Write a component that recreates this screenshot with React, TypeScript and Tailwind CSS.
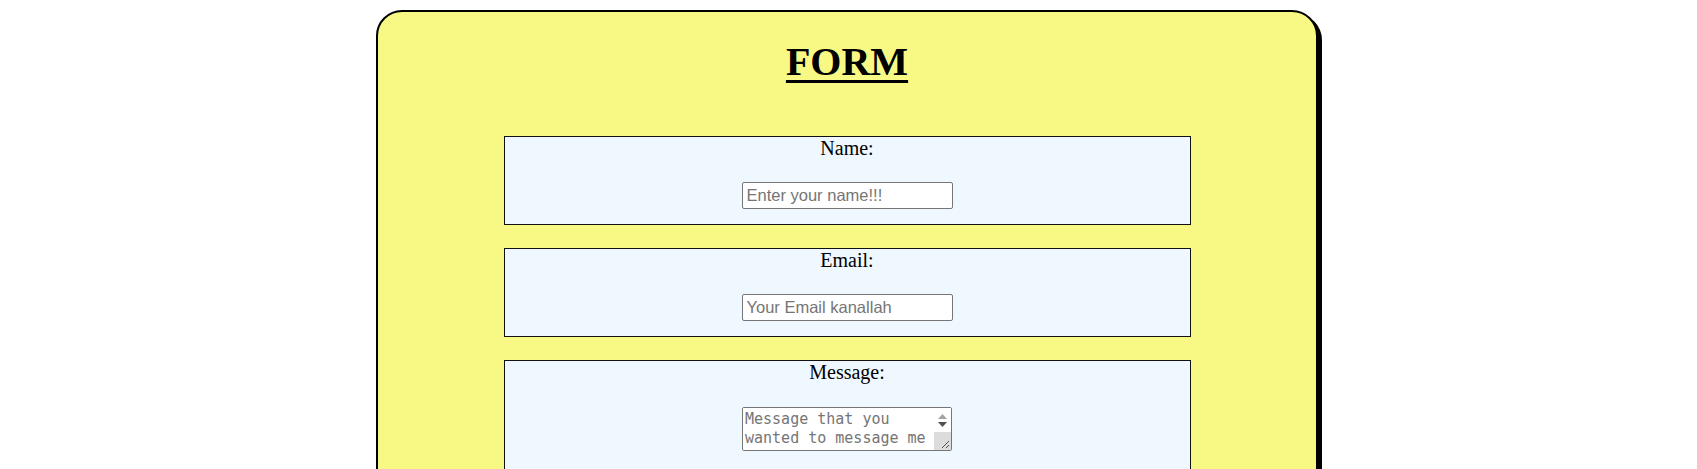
import type { ReactNode } from "react";

const serif = { fontFamily: '"Liberation Serif", "Times New Roman", serif' };
const sans = { fontFamily: '"Liberation Sans", Arial, sans-serif' };

function Field({ label, children, last }: { label: string; children: ReactNode; last?: boolean }) {
  return (
    <div
      className={
        "flex w-[687px] flex-col items-center border border-[#111] bg-[#f0f8ff] " + (last ? "pb-[40px]" : "pb-[15px]")
      }
    >
      <label className="text-[20px] leading-[22px] text-black">{label}</label>
      {children}
    </div>
  );
}

// textarea with the classic windows-style scrollbar + resize corner
function MessageBox() {
  return (
    <div className="mt-[24px] flex h-[44px] w-[210px] overflow-hidden rounded-[2px] border border-[#767676] bg-white">
      <textarea
        rows={2}
        placeholder="Message that you wanted to message me here"
        className="h-full flex-1 resize-none overflow-hidden bg-white px-[2px] py-[2px] text-[15px] leading-[19px] text-black placeholder:text-[#757575] focus:outline-none"
        style={{ fontFamily: '"DejaVu Sans Mono", "Liberation Mono", monospace' }}
      />
      <div className="flex w-[17px] flex-col bg-[#f1f1f1]">
        <div className="flex h-[24px] flex-col items-center justify-center gap-[3px] bg-white">
          <svg width="9" height="5" viewBox="0 0 9 5">
            <path d="M0 5 L4.5 0 L9 5 Z" fill="#a3a3a3" />
          </svg>
          <svg width="9" height="5" viewBox="0 0 9 5">
            <path d="M0 0 L4.5 5 L9 0 Z" fill="#505050" />
          </svg>
        </div>
        <div className="flex flex-1 items-end justify-end bg-[#dcdcdc]">
          <svg width="10" height="10" viewBox="0 0 10 10" className="mr-[1px] mb-[1px]">
            <path d="M9 2 L2 9 M9 6 L6 9" stroke="#555" strokeWidth="1" />
          </svg>
        </div>
      </div>
    </div>
  );
}

export default function App() {
  return (
    <div className="h-screen overflow-hidden bg-white" style={serif}>
      <div className="flex justify-center pt-[10px] pr-[3px]">
        <div className="flex w-[942px] flex-col items-center rounded-[26px] border-2 border-black bg-[#f8f985] pt-[28px] pb-[60px] shadow-[4px_4px_0_0_#000]">
          <h1 className="text-[40px] leading-[44px] font-bold text-black underline decoration-[3px] underline-offset-[5px]">
            FORM
          </h1>

          <div className="mt-[52px] flex flex-col items-center gap-[23px]">
            <Field label="Name:">
              <input
                type="text"
                placeholder="Enter your name!!!"
                className="mt-[23px] h-[27px] w-[211px] rounded-[2px] border border-[#767676] bg-white px-[4px] text-[16.5px] text-black placeholder:text-[#757575] focus:outline-none"
                style={sans}
              />
            </Field>

            <Field label="Email:">
              <input
                type="email"
                placeholder="Your Email kanallah"
                className="mt-[23px] h-[27px] w-[211px] rounded-[2px] border border-[#767676] bg-white px-[4px] text-[16.5px] text-black placeholder:text-[#757575] focus:outline-none"
                style={sans}
              />
            </Field>

            <Field label="Message:" last>
              <MessageBox />
            </Field>
          </div>
        </div>
      </div>
    </div>
  );
}
